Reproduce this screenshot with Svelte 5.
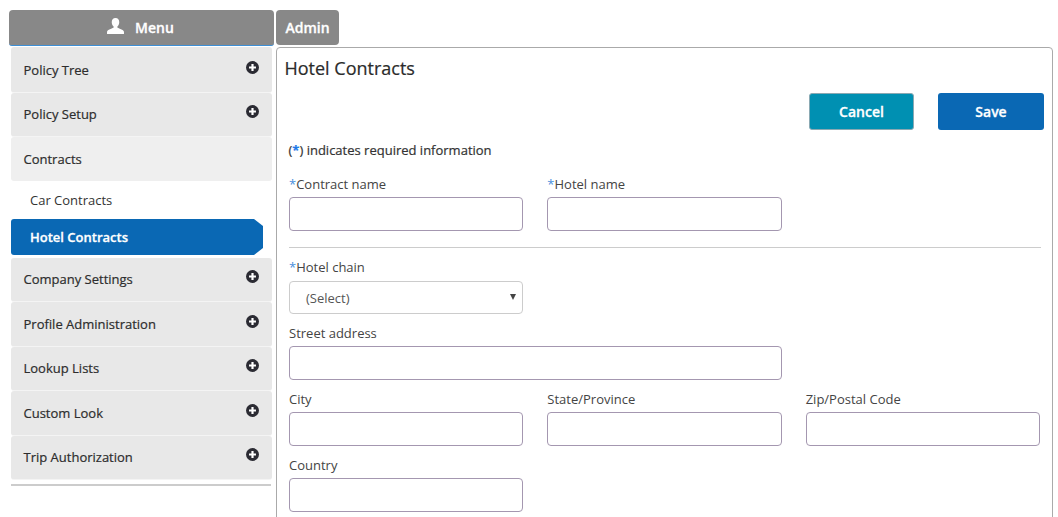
<script>
  const items = [
    { label: 'Policy Tree', h: 46 },
    { label: 'Policy Setup', h: 44 }
  ];
  const lower = [
    { label: 'Company Settings', h: 44 },
    { label: 'Profile Administration', h: 45 },
    { label: 'Lookup Lists', h: 44 },
    { label: 'Custom Look', h: 45 },
    { label: 'Trip Authorization', h: 44 }
  ];
</script>

{#snippet plus()}
  <svg class="plus" viewBox="0 0 12 12" width="13" height="13" aria-hidden="true">
    <circle cx="6" cy="6" r="6" fill="#2b2b33" />
    <path d="M6 2.800v6.400M2.800 6h6.400" stroke="#fff" stroke-width="2" />
  </svg>
{/snippet}

{#snippet menuItem(item)}
  <div class="item" class:short={item.h === 44} style="height:{item.h}px">
    <span>{item.label}</span>
    {@render plus()}
  </div>
{/snippet}

<div class="page">
  <aside class="side">
    <header class="menu-head">
      <svg viewBox="0 0 18 17" width="17" height="16" aria-hidden="true">
        <path fill="#fff" d="M9 0c2.700 0 4 2 4 4.400 0 2-.9 3.700-2 4.600v1.200c0 .8 6.200 1.700 7 4.300V17H0v-2.500c.8-2.600 7-3.500 7-4.300V9C5.900 8.100 5 6.400 5 4.400 5 2 6.300 0 9 0z" />
      </svg>
      <span>Menu</span>
    </header>
    <nav class="nav">
      {#each items as item}
        {@render menuItem(item)}
      {/each}
      <div class="item open"><span>Contracts</span></div>
      <div class="sub">Car Contracts</div>
      <div class="sub active">Hotel Contracts</div>
      <div class="lower">
        {#each lower as item}
          {@render menuItem(item)}
        {/each}
      </div>
      <div class="rule"></div>
    </nav>
  </aside>

  <main class="main">
    <div class="tab">Admin</div>
    <section class="panel">
      <h1>Hotel Contracts</h1>
      <div class="actions">
        <button class="btn cancel">Cancel</button>
        <button class="btn save">Save</button>
      </div>
      <p class="note">(<b>*</b>) indicates required information</p>
      <div class="form top">
        <label class="field"><span><i>*</i>Contract name</span><input /></label>
        <label class="field"><span><i>*</i>Hotel name</span><input /></label>
      </div>
      <hr />
      <div class="form">
        <label class="field"><span><i>*</i>Hotel chain</span>
          <div class="select">(Select)<em></em></div>
        </label>
        <label class="field wide"><span>Street address</span><input /></label>
        <label class="field first"><span>City</span><input /></label>
        <label class="field"><span>State/Province</span><input /></label>
        <label class="field"><span>Zip/Postal Code</span><input /></label>
        <label class="field first"><span>Country</span><input /></label>
      </div>
    </section>
  </main>
</div>

<style>
  :global(body) {
    margin: 0;
    background: #fff;
  }
  .page {
    height: 517px;
    overflow: hidden;
    display: flex;
    align-items: flex-start;
    padding: 10px 0 0 9px;
    box-sizing: border-box;
    font-family: "Open Sans", sans-serif;
    font-size: 13px;
    color: #333;
  }
  .side {
    width: 265px;
    flex: none;
  }
  .menu-head {
    height: 36px;
    box-sizing: border-box;
    background: #888;
    border-bottom: 1px solid #3d8fd6;
    border-radius: 4px 4px 3px 3px;
    display: flex;
    align-items: center;
    justify-content: center;
    gap: 11px;
    padding-right: 2px;
    color: #fff;
    font-size: 14px;
    font-weight: 600;
    -webkit-text-stroke: 0.3px #fff;
  }
  .menu-head svg {
    margin-top: -4px;
  }
  .nav {
    width: 261px;
    margin-left: 2px;
    margin-top: 1px;
    display: flex;
    flex-direction: column;
  }
  .item {
    flex: none;
    box-sizing: border-box;
    background: #e8e8e8;
    border-bottom: 1px solid #f4f4f4;
    border-radius: 3px;
    padding: 0 13.500px 0 12.500px;
    display: flex;
    align-items: center;
    justify-content: space-between;
    font-weight: 500;
    color: #2d2d2d;
    -webkit-text-stroke: 0.2px #2d2d2d;
  }
  .item.short {
    padding-bottom: 1px;
  }
  .item .plus {
    margin-top: -5px;
  }
  .item.open {
    height: 44px;
    background: #efefef;
    border: 0;
  }
  .sub {
    height: 38px;
    padding-left: 19px;
    display: flex;
    align-items: center;
    color: #333;
  }
  .sub.active {
    height: 36px;
    width: 252px;
    box-sizing: border-box;
    background: #0a68b4;
    color: #fff;
    font-weight: 600;
    -webkit-text-stroke: 0.3px #fff;
    border-radius: 3px 0 0 3px;
    clip-path: polygon(0 0, 243px 0, 100% 7px, 100% 29px, 243px 100%, 0 100%);
  }
  .lower {
    margin-top: 3px;
    display: flex;
    flex-direction: column;
  }
  .rule {
    height: 2px;
    margin-top: 4px;
    background: #ccc;
    width: 260px;
  }
  .main {
    margin-left: 2px;
    width: 777px;
    flex: none;
  }
  .tab {
    width: 63px;
    height: 35px;
    box-sizing: border-box;
    background: #888;
    border-radius: 4px;
    color: #fff;
    font-size: 14px;
    font-weight: 600;
    -webkit-text-stroke: 0.3px #fff;
    display: flex;
    align-items: center;
    justify-content: center;
  }
  .panel {
    margin-top: 2px;
    height: 480px;
    box-sizing: border-box;
    border: 1px solid #aaa;
    border-radius: 4px;
    padding: 0 0 0 12px;
    position: relative;
  }
  h1 {
    margin: 8px 0 0 -4.500px;
    font-size: 18px;
    line-height: 24px;
    font-weight: 500;
    color: #2b2b2b;
    -webkit-text-stroke: 0.2px #2b2b2b;
  }
  .actions {
    display: flex;
    justify-content: flex-end;
    gap: 24px;
    margin: 13px 8px 0 0;
  }
  .btn {
    height: 37px;
    width: 105px;
    border-radius: 3px;
    border: 1px solid transparent;
    color: #fff;
    font-family: inherit;
    font-size: 14px;
    font-weight: 600;
    -webkit-text-stroke: 0.3px #fff;
    padding: 0;
  }
  .cancel {
    background: #0090b2;
    border-color: #8aa9b3;
  }
  .save {
    width: 106px;
    background: #0a68b4;
  }
  .note {
    margin: 11px 0 0 -0.500px;
    line-height: 18px;
    font-weight: 500;
    -webkit-text-stroke: 0.2px #333;
  }
  .note b {
    color: #1f7ae8;
    font-weight: 700;
    -webkit-text-stroke: 0.2px #1f7ae8;
  }
  .form {
    display: grid;
    grid-template-columns: repeat(3, 234.33px);
    column-gap: 24px;
    row-gap: 0;
  }
  .top {
    margin-top: 16px;
  }
  .field {
    display: flex;
    flex-direction: column;
    height: 66px;
  }
  .field > span {
    height: 22px;
    line-height: 18px;
    color: #444;
  }
  i {
    color: #4a8fdc;
    font-style: normal;
  }
  input {
    box-sizing: border-box;
    height: 34px;
    width: 100%;
    border: 1px solid #a497b0;
    border-radius: 4px;
    background: #fff;
    padding: 0;
    margin: 0;
  }
  .wide {
    grid-column: 1 / span 2;
  }
  .first {
    grid-column: 1;
  }
  hr {
    border: 0;
    border-top: 1px solid #ccc;
    margin: 6px 11px 10px 0;
  }
  .select {
    box-sizing: border-box;
    height: 33px;
    margin-top: 1px;
    border: 1px solid #ccc;
    border-radius: 4px;
    padding: 0 0 0 16px;
    display: flex;
    align-items: center;
    justify-content: space-between;
    color: #555;
  }
  .select em {
    width: 0;
    height: 0;
    border-left: 3px solid transparent;
    border-right: 3px solid transparent;
    border-top: 6px solid #444;
    margin-right: 6px;
    margin-top: -2px;
  }
</style>
